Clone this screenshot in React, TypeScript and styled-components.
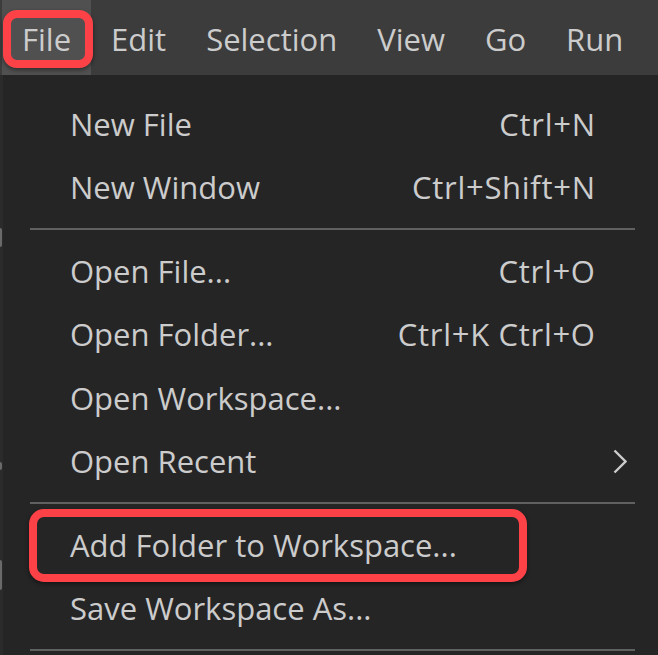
import React from 'react'
import styled, { createGlobalStyle } from 'styled-components'

const GlobalStyle = createGlobalStyle`
  html, body {
    margin: 0;
    padding: 0;
    background: #252526;
  }
  body {
    font-family: 'Open Sans', 'Noto Sans', sans-serif;
    -webkit-font-smoothing: antialiased;
  }
`

type Item = {
  label: string
  shortcut?: string
  submenu?: boolean
  marked?: boolean
}

const groups: Item[][] = [
  [
    { label: 'New File', shortcut: 'Ctrl+N' },
    { label: 'New Window', shortcut: 'Ctrl+Shift+N' },
  ],
  [
    { label: 'Open File...', shortcut: 'Ctrl+O' },
    { label: 'Open Folder...', shortcut: 'Ctrl+K Ctrl+O' },
    { label: 'Open Workspace...' },
    { label: 'Open Recent', submenu: true },
  ],
  [
    { label: 'Add Folder to Workspace...', marked: true },
    { label: 'Save Workspace As...' },
  ],
]

const menuBarItems = ['File', 'Edit', 'Selection', 'View', 'Go', 'Run']

export default function App() {
  return (
    <>
      <GlobalStyle />
      <Page>
        <MenuBar>
          {menuBarItems.map((name) => (
            <BarItem key={name} active={name === 'File'}>
              {name}
              {name === 'File' && <BarRing />}
            </BarItem>
          ))}
        </MenuBar>
        <Body>
          <EdgeStrip>
            <EdgeMark top={153} height={19} />
            <EdgeMark top={387} height={8} />
            <EdgeMark top={485} height={30} />
          </EdgeStrip>
          <Menu>
            {groups.map((group, gi) => (
              <React.Fragment key={gi}>
                {gi > 0 && <Separator />}
                {group.map((item) => (
                  <Row key={item.label}>
                    <Label>{item.label}</Label>
                    <Shortcut>{item.shortcut}</Shortcut>
                    <ArrowSlot>
                      {item.submenu && (
                        <svg width="14" height="25" viewBox="0 0 14 25">
                          <polyline
                            points="1.5,1.5 12.5,12.5 1.5,23.5"
                            fill="none"
                            stroke="#cccccc"
                            strokeWidth="2.4"
                          />
                        </svg>
                      )}
                    </ArrowSlot>
                    {item.marked && <RowRing />}
                  </Row>
                ))}
              </React.Fragment>
            ))}
            <Separator />
          </Menu>
        </Body>
      </Page>
    </>
  )
}

const Page = styled.div`
  width: 658px;
  height: 655px;
  overflow: hidden;
  display: flex;
  flex-direction: column;
`

const MenuBar = styled.div`
  height: 75px;
  flex: none;
  display: flex;
  align-items: stretch;
  padding-left: 2px;
  background: #3c3c3c;
`

const BarItem = styled.div<{ active?: boolean }>`
  position: relative;
  display: flex;
  align-items: center;
  padding: 2px 20px 0;
  font-size: 31px;
  color: #cccccc;
  background: ${(p) => (p.active ? '#505050' : 'transparent')};
`

const BarRing = styled.div`
  position: absolute;
  left: 1px;
  right: -2px;
  top: 10px;
  bottom: 7px;
  border: 8px solid #fd4247;
  border-radius: 14px;
  box-shadow: 0 2px 4px rgba(0, 0, 0, 0.45);
`

const Body = styled.div`
  flex: 1;
  display: flex;
`

const EdgeStrip = styled.div`
  position: relative;
  width: 3px;
  flex: none;
  background: #2b2b2b;
`

const EdgeMark = styled.div<{ top: number; height: number }>`
  position: absolute;
  left: 0;
  width: 2px;
  top: ${(p) => p.top}px;
  height: ${(p) => p.height}px;
  border-radius: 0 2px 2px 0;
  background: #6a6a6a;
`

const Menu = styled.div`
  flex: 1;
  padding-top: 17px;
  background: #252526;
`

const Row = styled.div`
  position: relative;
  height: 63.5px;
  display: grid;
  grid-template-columns: 1fr auto 63px;
  align-items: center;
  padding-left: 67px;
  font-size: 31px;
  color: #cccccc;
  white-space: nowrap;
`

const Label = styled.span``

const Shortcut = styled.span`
  text-align: right;
  letter-spacing: 0.7px;
  margin-right: -0.7px;
`

const ArrowSlot = styled.span`
  display: flex;
  align-items: center;
  padding-left: 18px;
  height: 25px;
`

const RowRing = styled.div`
  position: absolute;
  left: 26px;
  top: -4px;
  width: 498px;
  height: 73px;
  box-sizing: border-box;
  border: 8px solid #fd4247;
  border-radius: 15px;
  box-shadow: 0 2px 4px rgba(0, 0, 0, 0.45);
`

const Separator = styled.div`
  height: 2px;
  margin: 9px 23px 9px 27px;
  background: #606060;
`
